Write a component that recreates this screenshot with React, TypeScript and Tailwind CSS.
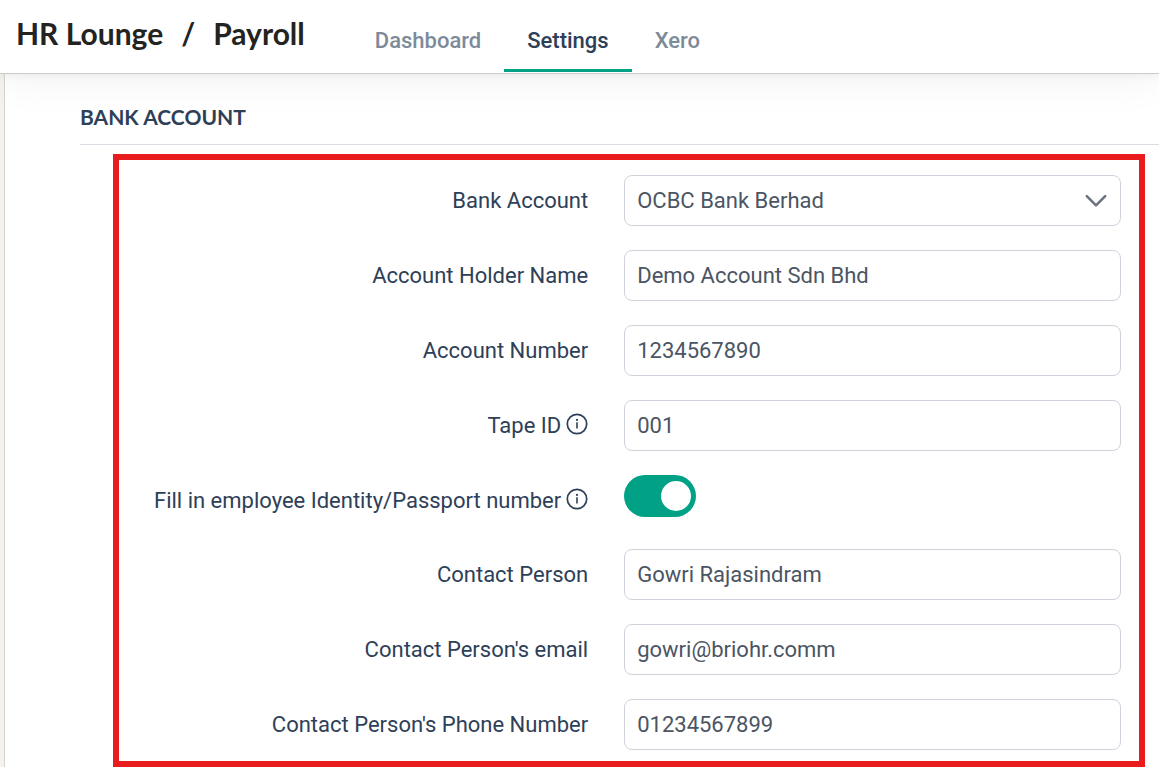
import { useState } from "react";
import type { ReactNode } from "react";

interface Tab {
  label: string;
  active?: boolean;
}

interface FormRowProps {
  id: string;
  label: string;
  info?: boolean;
  children: ReactNode;
}

interface TextRowProps {
  id: string;
  label: string;
  value: string;
  type?: string;
  info?: boolean;
}

const tabs: Tab[] = [
  { label: "Dashboard" },
  { label: "Settings", active: true },
  { label: "Xero" },
];

const fieldClass =
  "block w-full h-[51px] rounded-lg border border-[#d1d1db] bg-white px-3 text-[22px] text-[#4b5563] outline-none focus:border-[#00a185]";

function InfoIcon() {
  return (
    <svg className="w-[22px] h-[22px] shrink-0 mb-0.5" viewBox="0 0 22 22" fill="none" aria-hidden="true">
      <circle cx="11" cy="11" r="9.7" stroke="#2e4057" strokeWidth="1.7" />
      <circle cx="11" cy="6.9" r="1.1" fill="#2e4057" />
      <path d="M11 9.2v6.4" stroke="#2e4057" strokeWidth="1.6" />
    </svg>
  );
}

function FormRow({ id, label, info, children }: FormRowProps) {
  return (
    <div className="grid grid-cols-[17fr_18fr] gap-x-9">
      <label
        htmlFor={id}
        className="h-[50px] flex items-center justify-end gap-[5px] whitespace-nowrap text-[22px] text-[#2e4057]"
      >
        {label}
        {info && <InfoIcon />}
      </label>
      <div>{children}</div>
    </div>
  );
}

function TextRow({ id, label, value, type = "text", info }: TextRowProps) {
  return (
    <FormRow id={id} label={label} info={info}>
      <input id={id} type={type} defaultValue={value} className={fieldClass} />
    </FormRow>
  );
}

export default function App() {
  const [fillIdentity, setFillIdentity] = useState(true);

  return (
    <div className="min-h-screen flex flex-col bg-[#f5f1ec] font-['Roboto',sans-serif]">
      <header className="relative z-10 flex h-[74px] border-b border-[#cccccc] bg-white pl-4 shadow-[0_2px_8px_rgba(0,0,0,0.05),0_8px_40px_rgba(0,0,0,0.05)]">
        <h1 className="flex gap-[18px] pt-3 font-['Lato',sans-serif] text-[30px] leading-[42px] font-bold text-[#23231f] whitespace-nowrap">
          <span>HR Lounge</span>
          <span>/</span>
          <span>Payroll</span>
        </h1>
        <nav className="ml-[47px] flex">
          {tabs.map((tab) => (
            <a
              key={tab.label}
              href="#"
              aria-current={tab.active ? "page" : undefined}
              className={`h-[72px] border-b-[3px] px-[23px] pt-[26px] text-[22px] leading-[30px] font-medium ${
                tab.active ? "border-[#00a185] text-[#2e4057]" : "border-transparent text-[#7d8a9a]"
              }`}
            >
              {tab.label}
            </a>
          ))}
        </nav>
      </header>

      <main className="ml-1 grow border-l border-[#d5d5d5] bg-white pl-[75px] pt-7">
        <h2 className="border-b border-[#dadde3] pb-3 font-['Lato',sans-serif] text-[21px] leading-[30px] font-bold text-[#2e4057]">
          BANK ACCOUNT
        </h2>

        <form className="mt-[9px] ml-[33px] mr-[14px] flex flex-col gap-6 border-6 border-[#e81c1c] pt-[15px] pr-[18px] pb-[11px]">
          <FormRow id="bank" label="Bank Account">
            <div className="relative">
              <select id="bank" className={`${fieldClass} appearance-none`}>
                <option>OCBC Bank Berhad</option>
              </select>
              <svg
                className="pointer-events-none absolute right-[13px] top-[18px] w-6 h-4"
                viewBox="0 0 24 16"
                fill="none"
                aria-hidden="true"
              >
                <path
                  d="M2.8 3.2L12 12.4L21.2 3.2"
                  stroke="#6b7280"
                  strokeWidth="2.6"
                  strokeLinecap="round"
                  strokeLinejoin="round"
                />
              </svg>
            </div>
          </FormRow>
          <TextRow id="holder" label="Account Holder Name" value="Demo Account Sdn Bhd" />
          <TextRow id="number" label="Account Number" value="1234567890" />
          <TextRow id="tape" label="Tape ID" value="001" info />
          <FormRow id="identity" label="Fill in employee Identity/Passport number" info>
            <input
              id="identity"
              type="checkbox"
              role="switch"
              checked={fillIdentity}
              onChange={(e) => setFillIdentity(e.target.checked)}
              className="flex w-[72px] h-[42px] cursor-pointer appearance-none items-center rounded-full bg-[#c4c9d0] px-[5px] before:block before:size-[30px] before:rounded-full before:bg-white checked:justify-end checked:bg-[#00a185]"
            />
          </FormRow>
          <TextRow id="contact" label="Contact Person" value="Gowri Rajasindram" />
          <TextRow id="email" label="Contact Person's email" value="gowri@briohr.comm" type="email" />
          <TextRow id="phone" label="Contact Person's Phone Number" value="01234567899" type="tel" />
        </form>
      </main>
    </div>
  );
}
